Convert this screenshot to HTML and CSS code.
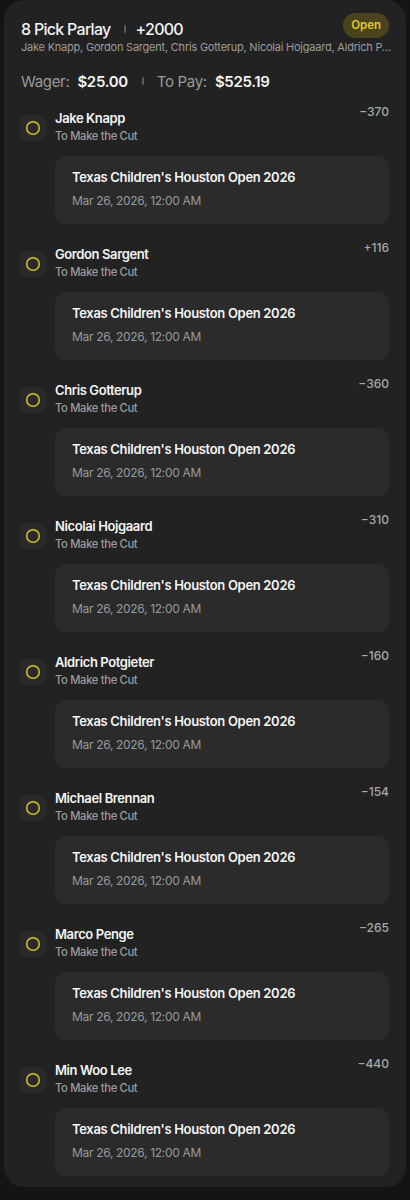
FILE: index.html
```html
<!DOCTYPE html>
<html>
<head>
<meta charset="utf-8">
<link rel="stylesheet" href="styles.css">
</head>
<body>
<div class="card">
  <div class="head">
    <div class="title-row">
      <span class="title">8 Pick Parlay</span>
      <span class="sep"></span>
      <span class="title odds-total">+2000</span>
      <span class="badge">Open</span>
    </div>
    <div class="subtitle">Jake Knapp, Gordon Sargent, Chris Gotterup, Nicolai Hojgaard, Aldrich P...</div>
  </div>
  <div class="wager-row">
    <span class="label">Wager:</span><span class="amount">$25.00</span>
    <span class="sep"></span>
    <span class="label">To Pay:</span><span class="amount">$525.19</span>
  </div>

  <div class="legs">
    <div class="leg">
      <div class="icon"><svg width="26" height="26" viewBox="0 0 26 26"><circle cx="13" cy="13" r="6.3" fill="none" stroke="#d8c327" stroke-width="1.5"/></svg></div>
      <div class="leg-top"><div class="leg-text"><div class="name">Jake Knapp</div><div class="market">To Make the Cut</div></div><div class="odds">−370</div></div>
      <div class="event"><div class="event-title">Texas Children's Houston Open 2026</div><div class="event-date">Mar 26, 2026, 12:00 AM</div></div>
    </div>
    <div class="leg">
      <div class="icon"><svg width="26" height="26" viewBox="0 0 26 26"><circle cx="13" cy="13" r="6.3" fill="none" stroke="#d8c327" stroke-width="1.5"/></svg></div>
      <div class="leg-top"><div class="leg-text"><div class="name">Gordon Sargent</div><div class="market">To Make the Cut</div></div><div class="odds">+116</div></div>
      <div class="event"><div class="event-title">Texas Children's Houston Open 2026</div><div class="event-date">Mar 26, 2026, 12:00 AM</div></div>
    </div>
    <div class="leg">
      <div class="icon"><svg width="26" height="26" viewBox="0 0 26 26"><circle cx="13" cy="13" r="6.3" fill="none" stroke="#d8c327" stroke-width="1.5"/></svg></div>
      <div class="leg-top"><div class="leg-text"><div class="name">Chris Gotterup</div><div class="market">To Make the Cut</div></div><div class="odds">−360</div></div>
      <div class="event"><div class="event-title">Texas Children's Houston Open 2026</div><div class="event-date">Mar 26, 2026, 12:00 AM</div></div>
    </div>
    <div class="leg">
      <div class="icon"><svg width="26" height="26" viewBox="0 0 26 26"><circle cx="13" cy="13" r="6.3" fill="none" stroke="#d8c327" stroke-width="1.5"/></svg></div>
      <div class="leg-top"><div class="leg-text"><div class="name">Nicolai Hojgaard</div><div class="market">To Make the Cut</div></div><div class="odds">−310</div></div>
      <div class="event"><div class="event-title">Texas Children's Houston Open 2026</div><div class="event-date">Mar 26, 2026, 12:00 AM</div></div>
    </div>
    <div class="leg">
      <div class="icon"><svg width="26" height="26" viewBox="0 0 26 26"><circle cx="13" cy="13" r="6.3" fill="none" stroke="#d8c327" stroke-width="1.5"/></svg></div>
      <div class="leg-top"><div class="leg-text"><div class="name">Aldrich Potgieter</div><div class="market">To Make the Cut</div></div><div class="odds">−160</div></div>
      <div class="event"><div class="event-title">Texas Children's Houston Open 2026</div><div class="event-date">Mar 26, 2026, 12:00 AM</div></div>
    </div>
    <div class="leg">
      <div class="icon"><svg width="26" height="26" viewBox="0 0 26 26"><circle cx="13" cy="13" r="6.3" fill="none" stroke="#d8c327" stroke-width="1.5"/></svg></div>
      <div class="leg-top"><div class="leg-text"><div class="name">Michael Brennan</div><div class="market">To Make the Cut</div></div><div class="odds">−154</div></div>
      <div class="event"><div class="event-title">Texas Children's Houston Open 2026</div><div class="event-date">Mar 26, 2026, 12:00 AM</div></div>
    </div>
    <div class="leg">
      <div class="icon"><svg width="26" height="26" viewBox="0 0 26 26"><circle cx="13" cy="13" r="6.3" fill="none" stroke="#d8c327" stroke-width="1.5"/></svg></div>
      <div class="leg-top"><div class="leg-text"><div class="name">Marco Penge</div><div class="market">To Make the Cut</div></div><div class="odds">−265</div></div>
      <div class="event"><div class="event-title">Texas Children's Houston Open 2026</div><div class="event-date">Mar 26, 2026, 12:00 AM</div></div>
    </div>
    <div class="leg">
      <div class="icon"><svg width="26" height="26" viewBox="0 0 26 26"><circle cx="13" cy="13" r="6.3" fill="none" stroke="#d8c327" stroke-width="1.5"/></svg></div>
      <div class="leg-top"><div class="leg-text"><div class="name">Min Woo Lee</div><div class="market">To Make the Cut</div></div><div class="odds">−440</div></div>
      <div class="event"><div class="event-title">Texas Children's Houston Open 2026</div><div class="event-date">Mar 26, 2026, 12:00 AM</div></div>
    </div>
  </div>
</div>
</body>
</html>
```

FILE: styles.css
```css
* { box-sizing: border-box; }
html, body { margin: 0; padding: 0; background: #141414; }
body {
  font-family: Inter, "Noto Sans", sans-serif;
  color: #f2f2f2;
  width: 410px;
  height: 1200px;
  overflow: hidden;
  letter-spacing: -0.02em;
}
.card {
  margin: 0 4px;
  background: #222222;
  border-radius: 20px;
  padding: 18px 17px 12px 16px;
  height: 1187px;
}
.head { padding-left: 1px; }
.title-row {
  display: flex;
  align-items: center;
  height: 21px;
}
.title {
  font-size: 16px;
  font-weight: 500;
  color: #f4f4f4;
  letter-spacing: -0.045em;
}
.sep {
  display: inline-block;
  width: 2px;
  height: 8px;
  background: #5a5a5a;
  border-radius: 1px;
  margin: 0 10px 0 13px;
}
.badge {
  margin-left: auto;
  align-self: flex-start;
  margin-top: -5px;
  height: 25px;
  line-height: 25px;
  padding: 0 8px;
  border-radius: 13px;
  background: #4a431d;
  color: #e6c92b;
  font-size: 11.5px;
  font-weight: 600;
  letter-spacing: 0;
  flex: none;
}
.subtitle {
  font-size: 11px;
  line-height: 16px;
  color: #9c9c9c;
  white-space: nowrap;
  letter-spacing: -0.02em;
}
.wager-row {
  display: flex;
  align-items: center;
  height: 20px;
  margin-top: 16px;
  padding-left: 1px;
  font-size: 15px;
}
.wager-row .label { color: #9a9a9a; margin-right: 8px; }
.wager-row .amount { color: #f4f4f4; font-weight: 600; }
.wager-row .sep { margin: 0 13px 0 14px; }
.legs {
  margin-top: 18px;
  display: flex;
  flex-direction: column;
  gap: 21px;
}
.leg {
  display: grid;
  grid-template-columns: 26px 1fr;
  column-gap: 9px;
  row-gap: 12px;
}
.icon {
  grid-row: 1;
  grid-column: 1;
  width: 26px;
  height: 26px;
  margin-top: 6px;
  background: #2a2a2a;
  border-radius: 7px;
}
.icon svg { display: block; }
.leg-top {
  grid-row: 1;
  grid-column: 2;
  display: flex;
  justify-content: space-between;
  align-items: flex-start;
}
.name {
  font-size: 13px;
  line-height: 18px;
  font-weight: 600;
  color: #f4f4f4;
  letter-spacing: -0.03em;
}
.market {
  font-size: 11.2px;
  line-height: 16px;
  font-weight: 500;
  color: #9c9c9c;
  margin-top: 1px;
}
.odds {
  font-size: 12px;
  line-height: 16px;
  color: #a8a8a8;
  margin-top: -5px;
  font-weight: 500;
  letter-spacing: 0;
}
.event {
  grid-row: 2;
  grid-column: 2;
  background: #2b2b2b;
  border-radius: 11px;
  padding: 12px 16px 14px 17px;
}
.event-title {
  font-size: 13px;
  line-height: 18px;
  font-weight: 600;
  color: #f4f4f4;
}
.event-date {
  font-size: 12px;
  line-height: 18px;
  color: #9a9a9a;
  margin-top: 6px;
}
```
